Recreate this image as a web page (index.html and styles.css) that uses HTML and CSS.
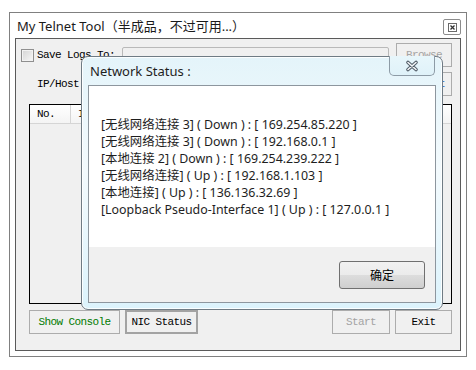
FILE: index.html
```html
<!DOCTYPE html>
<html lang="zh">
<head>
    <meta charset="UTF-8">
    <title>My Telnet Tool</title>
    <link rel="stylesheet" href="styles.css">
</head>
<body>
    <div class="window">
        <div class="titlebar">
            <span class="title">My Telnet Tool（半成品，不过可用...）</span>
            <span class="win-close">
                <svg width="9" height="9" viewBox="0 0 9 9"><rect x="0.5" y="0.5" width="8" height="8" fill="none" stroke="#6a6a6a"/><path d="M2.5 2.5 L6.5 6.5 M6.5 2.5 L2.5 6.5" stroke="#333" stroke-width="1.3"/></svg>
            </span>
        </div>
        <div class="panel">
            <div class="row">
                <span class="check"></span>
                <label class="label">Save Logs To:</label>
                <span class="field"></span>
                <button class="btn btn-side btn-off">Browse</button>
            </div>
            <div class="row row-host">
                <label class="label label-host">IP/Host</label>
                <span class="field field-host"></span>
                <button class="btn btn-side btn-connect">Connect</button>
            </div>
            <div class="list">
                <div class="list-head">
                    <span class="col col-no">No.</span>
                    <span class="col">IP</span>
                </div>
            </div>
            <div class="actions">
                <button class="btn btn-console">Show Console</button>
                <button class="btn btn-nic">NIC Status</button>
                <span class="spacer"></span>
                <button class="btn btn-start btn-off">Start</button>
                <button class="btn btn-exit">Exit</button>
            </div>
        </div>
    </div>

    <!-- NIC status dialog -->
    <div class="dialog">
        <div class="dialog-head">
            <span class="dialog-title">Network Status :</span>
        </div>
        <span class="dialog-close">
            <svg width="20" height="14" viewBox="0 0 20 14">
                <path d="M6 3.5 L14 10.5 M14 3.5 L6 10.5" stroke="#4f5b66" stroke-width="3.6" stroke-linecap="round"/>
                <path d="M6 3.5 L14 10.5 M14 3.5 L6 10.5" stroke="#f4f6f8" stroke-width="1.6" stroke-linecap="round"/>
            </svg>
        </span>
        <div class="client">
            <div class="status-text">
                <div>[无线网络连接 3] ( Down ) : [ 169.254.85.220 ]</div>
                <div>[无线网络连接 3] ( Down ) : [ 192.168.0.1 ]</div>
                <div>[本地连接 2] ( Down ) : [ 169.254.239.222 ]</div>
                <div>[无线网络连接] ( Up ) : [ 192.168.1.103 ]</div>
                <div>[本地连接] ( Up ) : [ 136.136.32.69 ]</div>
                <div>[Loopback Pseudo-Interface 1] ( Up ) : [ 127.0.0.1 ]</div>
            </div>
            <div class="client-foot">
                <button class="ok-btn">确定</button>
            </div>
        </div>
    </div>
</body>
</html>
```

FILE: styles.css
```css
body {
    margin: 0;
    background-color: #fff;
    font-family: "Noto Sans", "Noto Sans CJK SC", sans-serif;
}
.window {
    margin: 12px 0 0 9px;
    width: 458px;
    height: 345px;
    box-sizing: border-box;
    border: 1px solid #808080;
    display: flex;
    flex-direction: column;
}
.titlebar {
    height: 25px;
    display: flex;
    align-items: center;
    padding: 0 5px 0 7px;
}
.title {
    flex: 1;
    font-size: 13px;
    color: #1a1a1a;
}
.win-close {
    align-self: flex-start;
    margin-top: 6px;
    width: 18px;
    height: 16px;
    box-sizing: border-box;
    border: 1px solid #8c8c8c;
    border-radius: 2px;
    display: flex;
    align-items: center;
    justify-content: center;
}
.panel {
    margin: 0 5px 5px;
    height: 313px;
    box-sizing: border-box;
    border: 1px solid #5a5a5a;
    background-color: #f0f0f0;
    padding: 4px 8px 0 5px;
    display: flex;
    flex-direction: column;
}
.label, .btn, .col {
    font-family: "Liberation Mono", monospace;
    font-size: 11px;
    letter-spacing: -0.6px;
    color: #000;
}
.row {
    display: flex;
    align-items: center;
    height: 24px;
}
.row-host {
    margin-top: 5px;
}
.check {
    width: 13px;
    height: 13px;
    box-sizing: border-box;
    border: 1px solid #8f8f8f;
    background: linear-gradient(135deg, #d4d4d4, #f7f7f7);
    box-shadow: inset 0 0 0 1px #f2f2f2;
    margin-right: 3px;
}
.label {
    width: 85px;
}
.label-host {
    padding-left: 16px;
    width: 50px;
}
.field {
    align-self: flex-start;
    margin-top: 4px;
    width: 267px;
    height: 20px;
    box-sizing: border-box;
    border: 1px solid #b9b9b9;
    border-radius: 2px;
    margin-right: 7px;
}
.field-host {
    width: auto;
    flex: 1;
    background-color: #fff;
}
.btn {
    box-sizing: border-box;
    height: 24px;
    border: 1px solid #acacac;
    background-color: #f0f0f0;
    padding: 0;
}
.btn-side {
    width: 56px;
}
.btn-off {
    color: #a3a3a3;
}
.btn-connect {
    color: #1a5fc4;
}
.list {
    margin: 8px 0 0 8px;
    height: 200px;
    box-sizing: border-box;
    border: 1px solid #000;
    background-color: #f0f0f0;
}
.list-head {
    display: flex;
    height: 18px;
    background: linear-gradient(#ffffff, #f4f4f4);
    border-bottom: 1px solid #d5d5d5;
}
.col {
    display: flex;
    align-items: center;
    padding-left: 7px;
}
.col-no {
    width: 33px;
    border-right: 1px solid #d5d5d5;
}
.actions {
    display: flex;
    margin: 6px 0 0 8px;
}
.btn-console {
    width: 91px;
    color: #007a00;
}
.btn-nic {
    width: 73px;
    margin-left: 5px;
    border: 2px solid #a3a3a3;
}
.spacer {
    flex: 1;
}
.btn-start {
    width: 58px;
}
.btn-exit {
    width: 57px;
    margin-left: 5px;
}
.dialog {
    position: absolute;
    left: 81px;
    top: 56px;
    width: 362px;
    height: 254px;
    box-sizing: border-box;
    border: 1px solid #6f7b84;
    border-radius: 7px;
    background: linear-gradient(#e4f4fa, #f3fafd 45%, #dcf3fc);
    box-shadow: inset 0 0 0 1px rgba(255, 255, 255, 0.85);
    padding: 0 6px 6px;
    display: flex;
    flex-direction: column;
}
.dialog-head {
    height: 28px;
    display: flex;
    align-items: center;
    padding-left: 2px;
}
.dialog-title {
    font-size: 13px;
    color: #1e1e1e;
}
.dialog-close {
    position: absolute;
    top: -1px;
    right: 7px;
    width: 46px;
    height: 20px;
    box-sizing: border-box;
    border: 1px solid #8d9ba6;
    border-top: none;
    border-radius: 0 0 5px 5px;
    background: linear-gradient(#e8f6fb, #dff2f9);
    display: flex;
    align-items: center;
    justify-content: center;
}
.client {
    flex: 1;
    border: 1px solid #8d969e;
    background-color: #fff;
    display: flex;
    flex-direction: column;
}
.status-text {
    flex: 1;
    padding: 30px 12px 0;
    font-size: 12.4px;
    line-height: 17px;
    color: #1e1e1e;
}
.client-foot {
    height: 55px;
    background-color: #f0f0f0;
    display: flex;
    align-items: center;
    justify-content: flex-end;
    padding-right: 10px;
}
.ok-btn {
    width: 86px;
    height: 28px;
    box-sizing: border-box;
    border: 1px solid #707070;
    border-radius: 3px;
    background: linear-gradient(#f2f2f2, #ebebeb 50%, #dddddd 50%, #cfcfcf);
    font-family: "Noto Sans CJK SC", sans-serif;
    font-size: 12px;
    color: #000;
    padding: 0;
}
```
